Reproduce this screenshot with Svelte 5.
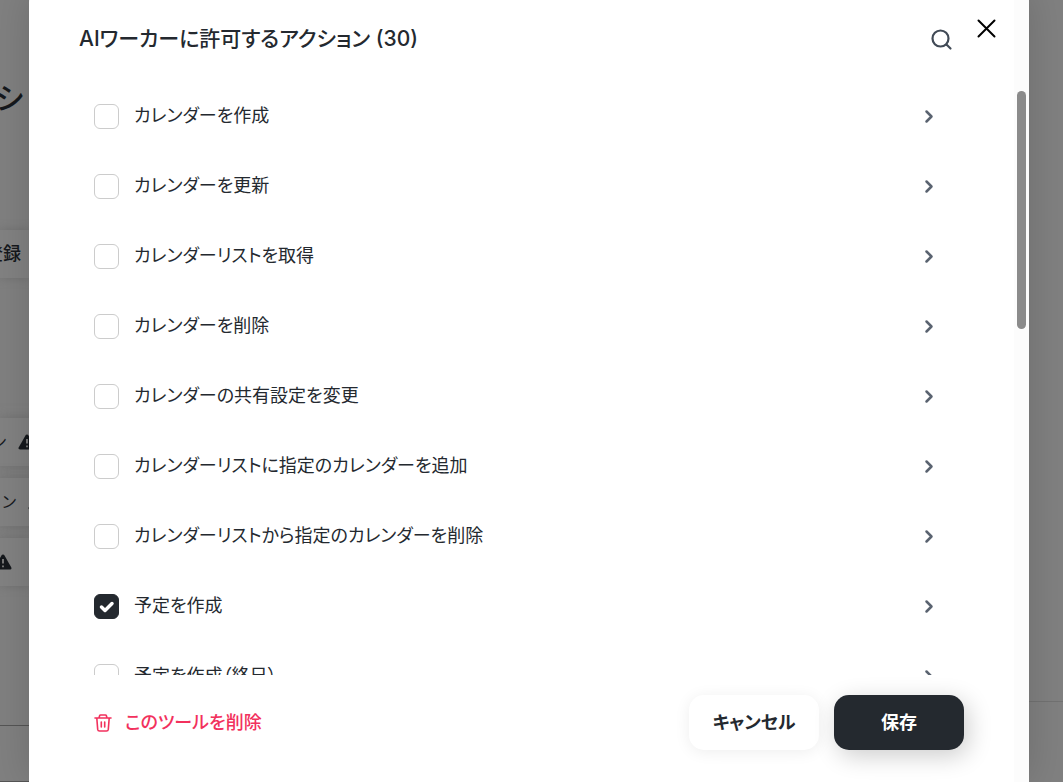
<script>
  let actions = $state([
    { name: 'カレンダーを作成', on: false },
    { name: 'カレンダーを更新', on: false },
    { name: 'カレンダーリストを取得', on: false },
    { name: 'カレンダーを削除', on: false },
    { name: 'カレンダーの共有設定を変更', on: false },
    { name: 'カレンダーリストに指定のカレンダーを追加', on: false },
    { name: 'カレンダーリストから指定のカレンダーを削除', on: false },
    { name: '予定を作成', on: true },
    { name: '予定を作成（終日）', on: false }
  ]);
</script>

{#snippet warning()}
  <svg class="warning" viewBox="0 0 18 16" width="18" height="16" aria-hidden="true">
    <path d="M9 0.5c.7 0 1.200.4 1.500.9l6.700 11.800c.7 1.300 0 2.300-1.500 2.300H2.300c-1.500 0-2.200-1-1.500-2.300L7.500 1.400C7.800.9 8.300.5 9 .5Z" fill="#15181c" />
    <path d="M9 5v4.500M9 11.500v1.800" stroke="#808080" stroke-width="1.800" />
  </svg>
{/snippet}

<div class="stage">
  <div class="behind" aria-hidden="true">
    <div class="column">
      <div class="heading">シ</div>
      <div class="card register">登録</div>
      <div class="card first"><span>ン</span>{@render warning()}</div>
      <div class="card second"><span>ン</span>{@render warning()}</div>
      <div class="card third">{@render warning()}</div>
      <div class="lines"></div>
    </div>
    <div class="panel"></div>
  </div>

  <div class="modal" role="dialog" aria-modal="true" aria-labelledby="dialog-title">
    <header>
      <h1 id="dialog-title">AIワーカーに許可するアクション (30)</h1>
      <button class="icon search" aria-label="検索">
        <svg viewBox="0 0 24 24" width="24" height="24" fill="none" stroke="#414a56" stroke-width="2.200" stroke-linecap="round">
          <circle cx="10.500" cy="10.500" r="8" /><path d="m16.500 16.500 4 4" />
        </svg>
      </button>
      <button class="icon close" aria-label="閉じる">
        <svg viewBox="0 0 20 20" width="20" height="20" fill="none" stroke="#000" stroke-width="2" stroke-linecap="round">
          <path d="m2.500 2.500 16 16M18.500 2.500l-16 16" />
        </svg>
      </button>
    </header>

    <ul>
      {#each actions as action}
        <li>
          <label>
            <input type="checkbox" bind:checked={action.on} />
            <span>{action.name}</span>
          </label>
          <button class="icon" aria-label="詳細">
            <svg viewBox="0 0 12 16" width="12" height="16" fill="none" stroke="#5a6370" stroke-width="2.500" stroke-linecap="round" stroke-linejoin="round">
              <path d="m3.500 3.500 5 5-5 5" />
            </svg>
          </button>
        </li>
      {/each}
    </ul>

    <footer>
      <button class="delete">
        <svg viewBox="0 0 18 18" width="18" height="18" fill="none" stroke="#f2315d" stroke-width="1.600" stroke-linecap="round" stroke-linejoin="round" aria-hidden="true">
          <path d="M1 4h16M5 4l.6-2.200Q5.800 1 6.600 1h4.800q.8 0 1 .8L13 4M2.800 4l.9 11.400Q3.900 17 5.500 17h7q1.600 0 1.800-1.600L15.200 4M7.300 8v5M10.700 8v5" />
        </svg>
        このツールを削除
      </button>
      <button class="action cancel">キャンセル</button>
      <button class="action save">保存</button>
    </footer>

    <div class="track"><div class="thumb"></div></div>
  </div>
</div>

<style>
  :global(body) {
    margin: 0;
  }
  .stage {
    position: relative;
    height: 100vh;
    overflow: hidden;
    background: #808080;
    color: #24292f;
    font-family: Inter, 'Noto Sans CJK JP', sans-serif;
    font-size: 18px;
    line-height: 24px;
    font-feature-settings: 'palt';
  }
  .behind {
    position: absolute;
    inset: 0;
    display: flex;
    justify-content: space-between;
    color: #15181c;
  }
  .column {
    display: flex;
    flex-direction: column;
    width: 29px;
    white-space: nowrap;
  }
  .heading {
    align-self: flex-end;
    margin: 78px 6px 0 0;
    font-size: 30px;
    font-weight: 500;
    line-height: 40px;
  }
  .card {
    display: flex;
    align-items: center;
    justify-content: flex-end;
    gap: 12px;
    box-sizing: border-box;
    height: 48px;
    flex: none;
    background: #828282;
    box-shadow: 0 0 10px #6f6f6f;
  }
  .warning {
    flex: none;
  }
  .register {
    margin-top: 112px;
    padding-right: 8px;
    font-weight: 500;
  }
  .first {
    margin-top: 140px;
    font-size: 16px;
    margin-right: -7px;
  }
  .second {
    margin-top: 12px;
    font-size: 16px;
    margin-right: -17px;
  }
  .third {
    margin-top: 12px;
    padding-right: 17px;
  }
  .lines {
    flex: none;
    height: 55px;
    margin-top: 139px;
    border-top: 1px solid #555;
    border-bottom: 1px solid #555;
  }
  .panel {
    width: 34px;
    margin-top: 701px;
    border-top: 1px solid #727272;
  }
  .modal {
    position: relative;
    display: flex;
    flex-direction: column;
    box-sizing: border-box;
    height: calc(100vh + 10px);
    margin: -10px 34px 0 29px;
    padding: 10px 15px 0 50px;
    border-radius: 12px 12px 0 0;
    background: #fff;
    box-shadow: 0 0 40px rgba(0, 0, 0, 0.16);
  }
  header {
    display: flex;
    align-items: flex-start;
    flex: none;
    height: 81px;
  }
  h1 {
    flex: 1;
    margin: 24px 0 0;
    font-size: 21px;
    font-weight: 500;
    line-height: 30px;
  }
  button {
    border: 0;
    padding: 0;
    background: none;
    color: inherit;
    font: inherit;
    font-feature-settings: inherit;
    cursor: pointer;
  }
  .icon {
    display: flex;
  }
  .search {
    margin-top: 28px;
  }
  .close {
    margin: 18px 18px 0 22px;
  }
  ul {
    flex: 1;
    min-height: 0;
    margin: 0;
    padding: 0 79px 0 15px;
    list-style: none;
    overflow: hidden;
  }
  li {
    display: flex;
    align-items: center;
    justify-content: space-between;
    height: 70px;
  }
  label {
    display: flex;
    align-items: center;
    gap: 15px;
  }
  input {
    appearance: none;
    box-sizing: border-box;
    width: 25px;
    height: 25px;
    margin: 0;
    border: 1px solid #ccc;
    border-radius: 6px;
    background: #fff;
  }
  input:checked {
    border-color: #24292f;
    background: #24292f url("data:image/svg+xml,%3Csvg xmlns='http://www.w3.org/2000/svg' viewBox='0 0 25 25'%3E%3Cpath d='m7.500 13 3.500 3.500 7-7' fill='none' stroke='white' stroke-width='3.500' stroke-linecap='round' stroke-linejoin='round'/%3E%3C/svg%3E") center / 25px no-repeat;
  }
  footer {
    display: flex;
    align-items: flex-start;
    gap: 15px;
    flex: none;
    height: 87px;
    padding: 20px 50px 0 15px;
  }
  .delete {
    display: flex;
    align-items: center;
    gap: 13px;
    height: 55px;
    margin-right: auto;
    color: #f2315d;
    font-weight: 500;
  }
  .action {
    width: 130px;
    height: 55px;
    border-radius: 15px;
    font-weight: 700;
  }
  .cancel {
    background: #fff;
    box-shadow: 0 2px 16px rgba(0, 0, 0, 0.07);
  }
  .save {
    background: #24292f;
    color: #fff;
    box-shadow: 4px 6px 24px rgba(0, 0, 0, 0.2);
  }
  .track {
    position: absolute;
    inset: 0 0 0 auto;
    width: 15px;
    border-radius: 0 12px 0 0;
    background: #fcfcfc;
  }
  .thumb {
    width: 9px;
    height: 238px;
    margin: 101px auto 0;
    border-radius: 5px;
    background: #8b8b8b;
  }
</style>
